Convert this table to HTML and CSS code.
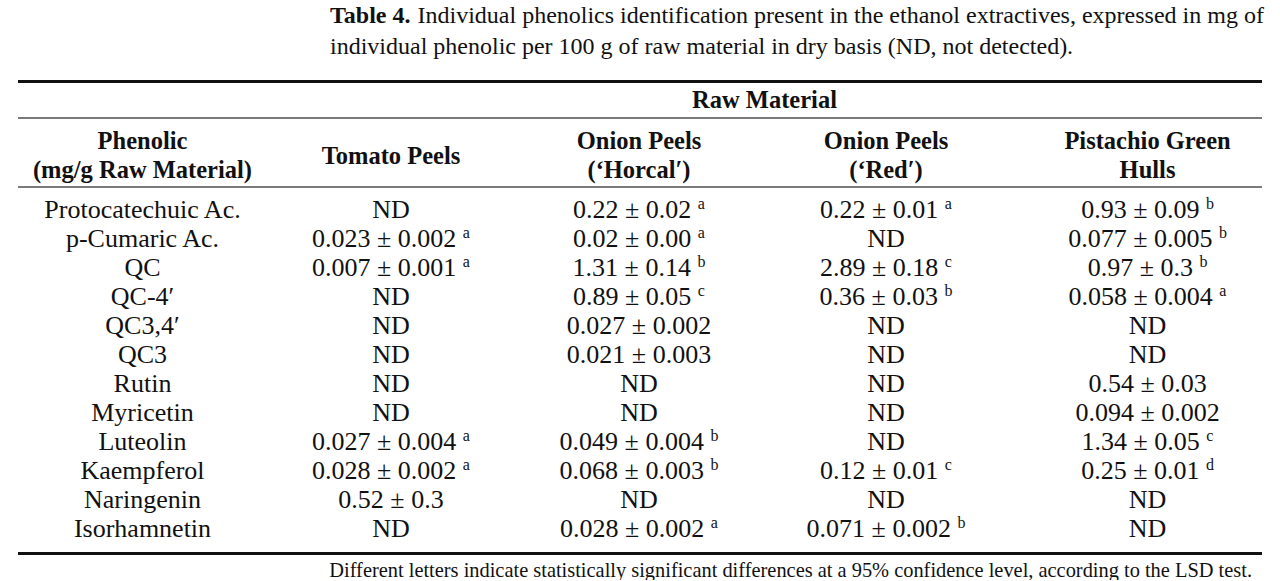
FILE: index.html
```html
<!DOCTYPE html>
<html lang="en">
<head>
<meta charset="utf-8">
<title>Table 4</title>
<link rel="stylesheet" href="styles.css">
</head>
<body>
<div class="page">
  <p class="caption"><b class="label">Table 4.</b> Individual phenolics identification present in the ethanol extractives, expressed in mg of individual phenolic per 100 g of raw material in dry basis (ND, not detected).</p>
  <table class="data">
    <colgroup>
      <col class="c1"><col class="c2"><col class="c3"><col class="c4"><col class="c5">
    </colgroup>
    <thead>
      <tr class="group-row">
        <th></th>
        <th colspan="4">Raw Material</th>
      </tr>
      <tr class="head-row">
        <th>Phenolic<br>(mg/g Raw Material)</th>
        <th>Tomato Peels</th>
        <th>Onion Peels<br>(‘Horcal′)</th>
        <th>Onion Peels<br>(‘Red′)</th>
        <th class="last">Pistachio Green<br>Hulls</th>
      </tr>
    </thead>
    <tbody>
      <tr><td>Protocatechuic Ac.</td><td>ND</td><td>0.22 ± 0.02 <sup>a</sup></td><td>0.22 ± 0.01 <sup>a</sup></td><td class="last">0.93 ± 0.09 <sup>b</sup></td></tr>
      <tr><td>p-Cumaric Ac.</td><td>0.023 ± 0.002 <sup>a</sup></td><td>0.02 ± 0.00 <sup>a</sup></td><td>ND</td><td class="last">0.077 ± 0.005 <sup>b</sup></td></tr>
      <tr><td>QC</td><td>0.007 ± 0.001 <sup>a</sup></td><td>1.31 ± 0.14 <sup>b</sup></td><td>2.89 ± 0.18 <sup>c</sup></td><td class="last">0.97 ± 0.3 <sup>b</sup></td></tr>
      <tr><td>QC-4′</td><td>ND</td><td>0.89 ± 0.05 <sup>c</sup></td><td>0.36 ± 0.03 <sup>b</sup></td><td class="last">0.058 ± 0.004 <sup>a</sup></td></tr>
      <tr><td>QC3,4′</td><td>ND</td><td>0.027 ± 0.002</td><td>ND</td><td class="last">ND</td></tr>
      <tr><td>QC3</td><td>ND</td><td>0.021 ± 0.003</td><td>ND</td><td class="last">ND</td></tr>
      <tr><td>Rutin</td><td>ND</td><td>ND</td><td>ND</td><td class="last">0.54 ± 0.03</td></tr>
      <tr><td>Myricetin</td><td>ND</td><td>ND</td><td>ND</td><td class="last">0.094 ± 0.002</td></tr>
      <tr><td>Luteolin</td><td>0.027 ± 0.004 <sup>a</sup></td><td>0.049 ± 0.004 <sup>b</sup></td><td>ND</td><td class="last">1.34 ± 0.05 <sup>c</sup></td></tr>
      <tr><td>Kaempferol</td><td>0.028 ± 0.002 <sup>a</sup></td><td>0.068 ± 0.003 <sup>b</sup></td><td>0.12 ± 0.01 <sup>c</sup></td><td class="last">0.25 ± 0.01 <sup>d</sup></td></tr>
      <tr><td>Naringenin</td><td>0.52 ± 0.3</td><td>ND</td><td>ND</td><td class="last">ND</td></tr>
      <tr><td>Isorhamnetin</td><td>ND</td><td>0.028 ± 0.002 <sup>a</sup></td><td>0.071 ± 0.002 <sup>b</sup></td><td class="last">ND</td></tr>
    </tbody>
  </table>
  <p class="note">Different letters indicate statistically significant differences at a 95% confidence level, according to the LSD test.</p>
</div>
</body>
</html>
```

FILE: styles.css
```css
html, body {
  margin: 0;
  padding: 0;
  background: #ffffff;
}

body {
  font-family: "Liberation Serif", "DejaVu Serif", serif;
  color: #111111;
}

.page {
  width: 1244px;
  margin-left: 18px;
}

.caption {
  width: 940px;
  margin: 0 0 0 312px;
  font-size: 24px;
  line-height: 31px;
}

.caption .label {
  font-weight: bold;
  margin-right: 1px;
}

.data {
  margin-top: 18px;
  width: 1244px;
  border-collapse: collapse;
  table-layout: fixed;
  font-family: "Liberation Serif", "DejaVu Serif", serif;
  font-size: 26px;
}

.c1 { width: 249px; }
.c2 { width: 248px; }
.c3 { width: 248px; }
.c4 { width: 246px; }
.c5 { width: 253px; }

.data thead {
  border-top: 3px solid #111111;
}

.data th {
  font-family: "Liberation Serif", "DejaVu Serif", serif;
  font-size: 24.5px;
  font-weight: bold;
}

.group-row th {
  height: 34px;
  padding: 0;
  line-height: 34px;
  border-bottom: 2px solid #7a7a7a;
}

.head-row th {
  padding: 7px 0 2px;
  line-height: 29px;
  text-align: center;
  vertical-align: middle;
  border-bottom: 2px solid #7a7a7a;
}

.data td {
  padding: 0;
  height: 29px;
  line-height: 29px;
  text-align: center;
  white-space: nowrap;
}

.data .last {
  padding-left: 24px;
}

.data tbody tr:first-child td {
  padding-top: 7px;
}

.data tbody tr:last-child td {
  padding-bottom: 9px;
}

.data tbody {
  border-bottom: 3px solid #111111;
}

sup {
  font-size: 16px;
  line-height: 0;
  vertical-align: 9px;
}

.note {
  margin: 5px 10px 0 0;
  text-align: right;
  font-size: 20.4px;
  line-height: 20px;
}
```
